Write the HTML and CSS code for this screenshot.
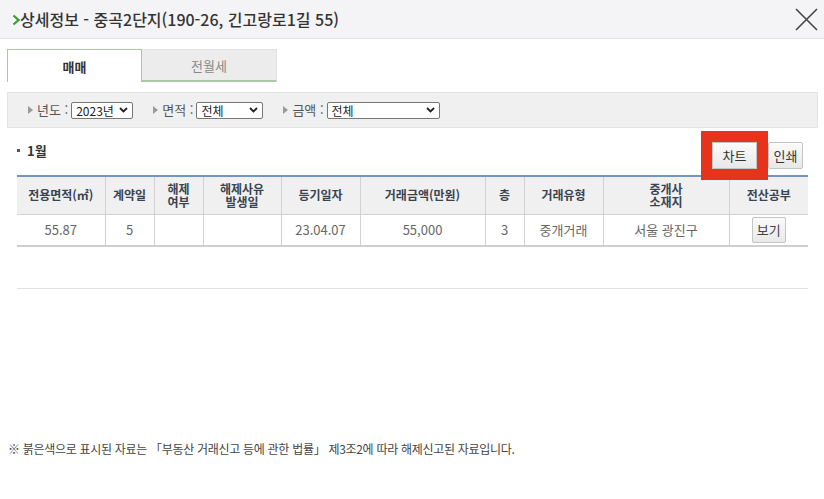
FILE: index.html
```html
<!DOCTYPE html>
<html lang="ko">
<head>
<meta charset="utf-8">
<title>상세정보</title>
<link rel="stylesheet" href="styles.css">
</head>
<body>
<header class="top">
  <h1 class="title"><svg class="chev" width="8" height="12" viewBox="0 0 8 12"><polyline points="1.5,1.5 6.5,6 1.5,10.5" fill="none" stroke="#3d9a3d" stroke-width="2.2"/></svg>상세정보 - 중곡2단지(190-26, 긴고랑로1길 55)</h1>
  <svg class="close" width="23" height="23" viewBox="0 0 23 23"><path d="M1 1 L22 22 M22 1 L1 22" stroke="#444" stroke-width="1.6" fill="none"/></svg>
</header>
<main class="main">
  <div class="tabs">
    <div class="tab active">매매</div>
    <div class="tab">전월세</div>
  </div>
  <div class="filters">
    <div class="f-item"><svg class="tri" width="5" height="8" viewBox="0 0 5 8"><polygon points="0,0 5,4 0,8" fill="#9a9a9a"/></svg><span class="f-label">년도 :</span><div class="sel w62"><span>2023년</span><svg width="9" height="6" viewBox="0 0 9 6"><polyline points="1,1 4.5,4.5 8,1" fill="none" stroke="#222" stroke-width="1.8"/></svg></div></div>
    <div class="f-item"><svg class="tri" width="5" height="8" viewBox="0 0 5 8"><polygon points="0,0 5,4 0,8" fill="#9a9a9a"/></svg><span class="f-label">면적 :</span><div class="sel w66"><span>전체</span><svg width="9" height="6" viewBox="0 0 9 6"><polyline points="1,1 4.5,4.5 8,1" fill="none" stroke="#222" stroke-width="1.8"/></svg></div></div>
    <div class="f-item"><svg class="tri" width="5" height="8" viewBox="0 0 5 8"><polygon points="0,0 5,4 0,8" fill="#9a9a9a"/></svg><span class="f-label">금액 :</span><div class="sel w113"><span>전체</span><svg width="9" height="6" viewBox="0 0 9 6"><polyline points="1,1 4.5,4.5 8,1" fill="none" stroke="#222" stroke-width="1.8"/></svg></div></div>
  </div>
  <div class="section">
    <div class="toolbar">
      <div class="month"><span class="dot"></span>1월</div>
      <div class="btns">
        <button class="btn chart">차트</button>
        <button class="btn print">인쇄</button>
      </div>
    </div>
    <table class="grid">
      <colgroup>
        <col class="c88"><col class="c49"><col class="c49"><col class="c78"><col class="c79"><col class="c125"><col class="c39"><col class="c79"><col class="c126"><col class="c79">
      </colgroup>
      <thead>
        <tr>
          <th>전용면적(㎡)</th>
          <th>계약일</th>
          <th><span class="ln">해제</span><span class="ln">여부</span></th>
          <th><span class="ln">해제사유</span><span class="ln">발생일</span></th>
          <th>등기일자</th>
          <th>거래금액(만원)</th>
          <th>층</th>
          <th>거래유형</th>
          <th><span class="ln">중개사</span><span class="ln">소재지</span></th>
          <th>전산공부</th>
        </tr>
      </thead>
      <tbody>
        <tr>
          <td>55.87</td>
          <td>5</td>
          <td></td>
          <td></td>
          <td>23.04.07</td>
          <td>55,000</td>
          <td>3</td>
          <td>중개거래</td>
          <td>서울 광진구</td>
          <td><button class="btn view">보기</button></td>
        </tr>
      </tbody>
    </table>
    <hr class="sep">
  </div>
  <p class="note">※ 붉은색으로 표시된 자료는 「부동산 거래신고 등에 관한 법률」 제3조2에 따라 해제신고된 자료입니다.</p>
</main>
</body>
</html>
```

FILE: styles.css
```css
* { box-sizing: border-box; }
html, body { margin: 0; padding: 0; background: #fff; }
body {
  font-family: "Noto Sans CJK KR", "Noto Sans", sans-serif;
  color: #333;
  width: 824px;
  height: 499px;
  overflow: hidden;
}
.top {
  height: 39px;
  background: #f4f4f6;
  border-bottom: 1px solid #e3e3e6;
  display: flex;
  align-items: center;
  justify-content: space-between;
  padding: 0 6px 0 12px;
}
.title {
  margin: 0;
  font-size: 16px;
  font-weight: 500;
  line-height: 20px;
  color: #333;
  display: flex;
  align-items: center;
}
.chev { margin-right: 0; margin-top: 1px; }
.close { margin-top: 1px; }
.main { padding: 0 6px 0 7px; }
.tabs {
  display: flex;
  margin-top: 10px;
  height: 33px;
}
.tab {
  width: 135px;
  display: flex;
  align-items: center;
  justify-content: center;
  font-size: 13px;
  color: #888;
  background: #ececec;
  border-bottom: 2px solid #a9c9a4;
  border-top: 1px solid #e2e2e2;
  border-right: 1px solid #e2e2e2;
}
.tab.active {
  background: #fff;
  color: #333;
  font-weight: 700;
  border: 1px solid #a9c9a4;
  border-bottom: none;
}
.filters {
  margin-top: 10px;
  height: 36px;
  background: #f0f0f0;
  border: 1px solid #e4e4e4;
  display: flex;
  align-items: center;
  padding-left: 20px;
  font-size: 13px;
  color: #555;
}
.f-item { display: flex; align-items: center; margin-right: 20px; }
.tri { margin-right: 4px; }
.f-label { margin-right: 3px; line-height: 16px; }
.sel {
  height: 17px;
  background: #fff;
  border: 1px solid #767676;
  border-radius: 2px;
  display: flex;
  align-items: center;
  justify-content: space-between;
  padding: 0 4px 0 4px;
  font-size: 12px;
  color: #222;
  line-height: 15px;
}
.w62 { width: 62px; }
.w66 { width: 67px; }
.w113 { width: 113px; }
.section { padding: 0 10px; }
.toolbar {
  display: flex;
  justify-content: space-between;
  align-items: flex-start;
  margin-top: 14px;
  padding-right: 5px;
}
.month {
  display: flex;
  align-items: center;
  font-size: 13px;
  font-weight: 700;
  color: #333;
  line-height: 17px;
}
.dot {
  width: 3px;
  height: 3px;
  background: #555;
  margin-right: 7px;
}
.btns { display: flex; gap: 11px; }
.btn {
  font-family: inherit;
  font-size: 13px;
  color: #333;
  height: 27px;
  padding: 0;
  background: linear-gradient(#fbfbfb, #e8e8e8);
  border: 1px solid #c4c4c4;
  border-radius: 2px;
  line-height: 25px;
}
.chart { width: 45px; border-radius: 0; outline: 11px solid #e6331b; }
.print { width: 35px; }
.grid {
  margin-top: 6px;
  width: 791px;
  border-collapse: collapse;
  table-layout: fixed;
  border-top: 2px solid #6f96c0;
  border-bottom: 2px solid #cfcfcf;
}
.c88 { width: 88px; } .c49 { width: 49px; } .c78 { width: 78px; } .c79 { width: 79px; }
.c125 { width: 125px; } .c39 { width: 39px; } .c126 { width: 126px; }
.grid th {
  height: 38px;
  background: #f0f0f0;
  font-size: 12px;
  font-weight: 700;
  color: #3a4450;
  line-height: 14px;
  border: 1px solid #d2d2d2;
  border-top: none;
  padding: 0;
  text-align: center;
}
.ln { display: block; line-height: 13px; }
.grid td {
  height: 32px;
  font-size: 13px;
  color: #666;
  border: 1px solid #d2d2d2;
  border-bottom: none;
  text-align: center;
  padding: 0;
}
.grid tr > :first-child { border-left: none; }
.grid tr > :last-child { border-right: none; }
.view { width: 34px; height: 26px; line-height: 24px; color: #444; }
.sep {
  margin: 41px 0 0 0;
  border: none;
  border-top: 1px solid #e2e2e2;
  height: 0;
}
.note {
  margin: 152px 0 0 1px;
  font-size: 12px;
  color: #444;
  letter-spacing: -0.3px;
  line-height: 15px;
}
```
